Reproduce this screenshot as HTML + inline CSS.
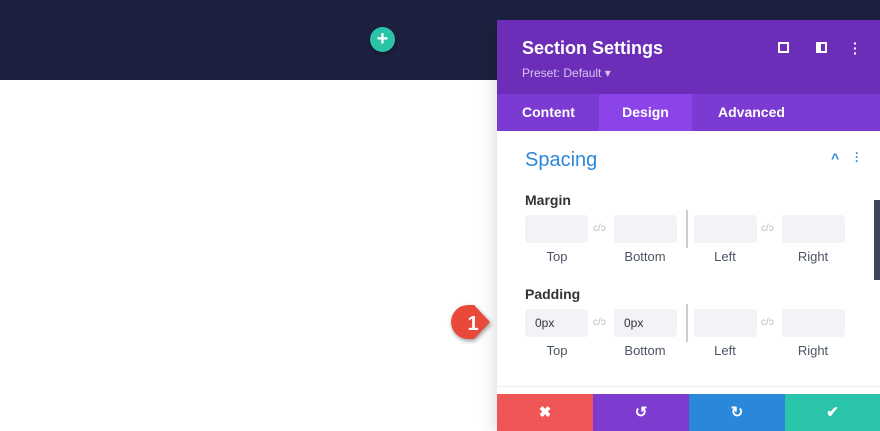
<!DOCTYPE html><html><head><style>
*{margin:0;padding:0;box-sizing:border-box}
body{width:880px;height:431px;overflow:hidden;background:#fff;font-family:"Liberation Sans",sans-serif;position:relative}
.a{position:absolute}
.top{left:0;top:0;width:880px;height:80px;background:#1e2040}
.plus{left:370px;top:27px;width:25px;height:25px;border-radius:50%;background:#2bc4a9;color:#fff;font-size:20px;font-weight:bold;text-align:center;line-height:24px;box-shadow:0 2px 5px rgba(0,0,0,.4)}
.panel{left:497px;top:20px;width:383px;height:411px;background:#fff;box-shadow:-4px 0 14px rgba(0,0,0,.12)}
.hd{left:0;top:0;width:383px;height:74px;background:#6c2eb8}
.tabs{left:0;top:74px;width:383px;height:37px;background:#7b3ad1}
.tab{position:absolute;top:0;height:37px;line-height:37px;color:#fff;font-size:14px;font-weight:bold}
.box{position:absolute;width:63px;height:28px;background:#f1f3f6;border-radius:3px;font-size:12px;color:#333;padding-left:10px;line-height:28px}
.lb{position:absolute;width:80px;text-align:center;font-size:13px;color:#4b5563}
.lk{position:absolute;font-size:10px;color:#bbb}
.fb{position:absolute;top:374px;height:37px;width:96px;color:#fff;text-align:center;line-height:37px;font-size:15px;font-weight:bold}
</style></head><body>
<div class="a top"></div>
<div class="a plus">+</div>
<div class="a panel">
 <div class="a hd">
  <div class="a" style="left:25px;top:18px;color:#fff;font-size:18px;font-weight:bold">Section Settings</div>
  <div class="a" style="left:25px;top:46px;color:#d6c4f0;font-size:12px">Preset: Default ▾</div>
  <div class="a" style="left:281px;top:22px;width:11px;height:11px;border:2px dashed #fff"></div>
  <div class="a" style="left:319px;top:22px;width:11px;height:11px;border:2px solid #fff;border-left-width:5px"></div>
  <div class="a" style="left:356px;top:21px;color:#fff;font-size:14px;font-weight:bold;line-height:5px">·<br>·<br>·</div>
 </div>
 <div class="a tabs">
  <div class="tab" style="left:25px">Content</div>
  <div class="tab" style="left:102px;width:93px;background:#8d43ea;text-align:center">Design</div>
  <div class="tab" style="left:221px">Advanced</div>
 </div>
 <div class="a" style="left:28px;top:129px;color:#2b87da;font-size:20px">Spacing</div>
 <div class="a" style="left:334px;top:130px;color:#2b87da;font-size:14px;font-weight:bold">^</div>
 <div class="a" style="left:358px;top:131px;color:#2b87da;font-size:12px;font-weight:bold;line-height:4px">·<br>·<br>·</div>
 <div class="a" style="left:377px;top:180px;width:6px;height:80px;background:#3c4656"></div>
 <div class="a" style="left:28px;top:172px;font-size:14px;font-weight:bold;color:#333">Margin</div>
 <div class="a" style="left:28px;top:266px;font-size:14px;font-weight:bold;color:#333">Padding</div>
 <div class="box" style="left:28px;top:195px"></div><div class="box" style="left:117px;top:195px"></div>
 <div class="box" style="left:197px;top:195px"></div><div class="box" style="left:285px;top:195px"></div>
 <div class="box" style="left:28px;top:289px">0px</div><div class="box" style="left:117px;top:289px">0px</div>
 <div class="box" style="left:197px;top:289px"></div><div class="box" style="left:285px;top:289px"></div>
 <div class="a" style="left:189px;top:190px;width:2px;height:38px;background:#ccc"></div>
 <div class="a" style="left:189px;top:284px;width:2px;height:38px;background:#ccc"></div>
 <div class="lk" style="left:96px;top:203px">c/ɔ</div><div class="lk" style="left:264px;top:203px">c/ɔ</div>
 <div class="lk" style="left:96px;top:297px">c/ɔ</div><div class="lk" style="left:264px;top:297px">c/ɔ</div>
 <div class="lb" style="left:20px;top:229px">Top</div><div class="lb" style="left:108px;top:229px">Bottom</div>
 <div class="lb" style="left:188px;top:229px">Left</div><div class="lb" style="left:276px;top:229px">Right</div>
 <div class="lb" style="left:20px;top:323px">Top</div><div class="lb" style="left:108px;top:323px">Bottom</div>
 <div class="lb" style="left:188px;top:323px">Left</div><div class="lb" style="left:276px;top:323px">Right</div>
 <div class="a" style="left:0;top:366px;width:383px;height:1px;background:#eee"></div>
 <div class="fb" style="left:0;background:#ef5555">✖</div>
 <div class="fb" style="left:96px;background:#7d3bcf">↺</div>
 <div class="fb" style="left:192px;background:#2b87da">↻</div>
 <div class="fb" style="left:288px;width:95px;background:#29c4a9">✔</div>
</div>
<svg class="a" style="left:446px;top:302px" width="60" height="42"><path d="M22 3 H28 L44 20 L28 37 H22 A17 17 0 0 1 22 3Z" fill="#e9493a" style="filter:drop-shadow(1px 2px 2px rgba(0,0,0,.4))"/><text x="27" y="28" fill="#fff" font-size="20" font-weight="bold" text-anchor="middle" font-family="Liberation Sans">1</text></svg>
</body></html>
